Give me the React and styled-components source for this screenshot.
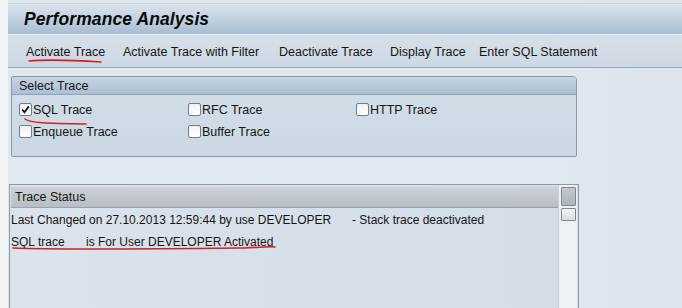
import styled, { createGlobalStyle } from 'styled-components';

const GlobalStyle = createGlobalStyle`
  html, body {
    margin: 0;
    padding: 0;
    background: #dfe6ed;
    font-family: "Liberation Sans", Arial, sans-serif;
    color: #111;
  }
`;

const Screen = styled.div`
  position: relative;
  width: 682px;
  height: 308px;
  overflow: hidden;
  background: linear-gradient(90deg, #f1f3f5 0px, #f1f3f5 8px, #dfe7ef 8px, #dfe7ef 560px, #dde4eb 682px);
  padding-top: 3px;
  box-sizing: border-box;
`;

const TitleBar = styled.div`
  margin-left: 8px;
  height: 31px;
  display: flex;
  align-items: center;
  padding-left: 16px;
  background: linear-gradient(180deg, #dbe4ee 0%, #c4d3e2 45%, #a9bdd1 100%);
  border-top: 1px solid #c8d3de;
  box-sizing: border-box;
`;

const Title = styled.h1`
  margin: 0;
  font-size: 17.5px;
  font-weight: bold;
  font-style: italic;
  color: #0a0a0a;
  letter-spacing: 0.1px;
`;

const Toolbar = styled.div`
  margin-left: 8px;
  height: 34px;
  display: flex;
  align-items: center;
  padding: 2px 0 0 18px;
  background: linear-gradient(180deg, #d6e0ea 0%, #cdd8e4 100%);
  border-top: 1px solid #e8eef4;
  border-bottom: 1px solid #97a7b8;
  box-sizing: border-box;
`;

const ToolItem = styled.span`
  font-size: 12.5px;
  color: #151515;
  width: ${p => p.w}px;
  flex: none;
  white-space: nowrap;
`;

const Group = styled.div`
  margin: 8px 0 0 11px;
  width: 566px;
  height: 81px;
  border: 1px solid #8798ab;
  border-radius: 2px 4px 2px 2px;
  background: linear-gradient(180deg, #d3dee8 0%, #cbd8e4 100%);
  box-sizing: border-box;
  overflow: hidden;
`;

const GroupHeader = styled.div`
  height: 17px;
  padding-left: 7px;
  display: flex;
  align-items: center;
  font-size: 12.5px;
  color: #151515;
  background: linear-gradient(180deg, #c6d4e3 0%, #aebfd3 100%);
  border-bottom: 1px solid #8ea0b4;
`;

const CheckGrid = styled.div`
  display: grid;
  grid-template-columns: 169px 168px auto;
  row-gap: 9px;
  padding: 8px 0 0 7px;
`;

const CheckRow = styled.label`
  display: flex;
  align-items: center;
  font-size: 12.5px;
  color: #151515;
  height: 13px;
`;

const Box = styled.span`
  width: 13px;
  height: 13px;
  box-sizing: border-box;
  border: 1px solid #707d8a;
  border-radius: 2px;
  background: linear-gradient(180deg, #eef1f4 0%, #ffffff 100%);
  margin-right: 1px;
  display: flex;
  align-items: center;
  justify-content: center;
  flex: none;
`;

const StatusPanel = styled.div`
  margin: 27px 0 0 9px;
  width: 570px;
  height: 130px;
  border: 1px solid #8c99a7;
  border-bottom: none;
  box-sizing: border-box;
  display: flex;
  background: linear-gradient(90deg, #dbe3eb 0%, #d2dde8 100%);
`;

const StatusBody = styled.div`
  flex: 1;
  padding-top: 2px;
`;

const StatusHeader = styled.div`
  height: 20px;
  margin-left: 1px;
  padding-left: 4px;
  display: flex;
  align-items: center;
  font-size: 12.5px;
  color: #151515;
  background: linear-gradient(180deg, #ccd1d7 0%, #b8bec5 100%);
  border-bottom: 1px solid #9aa2ab;
`;

const StatusLine = styled.div`
  height: 22px;
  display: flex;
  align-items: center;
  padding: 2px 0 0 1px;
  box-sizing: border-box;
  font-size: 12px;
  color: #151515;
  white-space: pre;
`;

const Cell = styled.span`
  display: inline-block;
  width: ${p => p.w}px;
`;

const ScrollBar = styled.div`
  width: 18px;
  display: flex;
  flex-direction: column;
  align-items: center;
  padding-top: 2px;
  background: #eef1f4;
  border-left: 1px solid #c9d0d7;
  margin-right: 1px;
`;

const ScrollBtn = styled.div`
  width: 15px;
  height: ${p => p.h}px;
  box-sizing: border-box;
  border: 1px solid #7d8792;
  background: ${p => p.dark ? 'linear-gradient(180deg, #c4c9cf, #aeb4bb)' : 'linear-gradient(180deg, #f3f5f7, #d7dde3)'};
  margin-bottom: 2px;
  border-radius: 1px;
`;

const Scribble = styled.svg`
  position: absolute;
  left: 0;
  top: 0;
  pointer-events: none;
`;

function Check({ checked, label }) {
  return (
    <CheckRow>
      <Box>
        {checked && (
          <svg width="9" height="9" viewBox="0 0 9 9">
            <path d="M1.2 4.6 L3.5 7.2 L7.8 1.4" fill="none" stroke="#1a1a1a" strokeWidth="1.8" />
          </svg>
        )}
      </Box>
      {label}
    </CheckRow>
  );
}

export default function App() {
  const tools = [
    ['Activate Trace', 97],
    ['Activate Trace with Filter', 156],
    ['Deactivate Trace', 111],
    ['Display Trace', 89],
    ['Enter SQL Statement', 140],
  ];
  return (
    <Screen>
      <GlobalStyle />
      <TitleBar>
        <Title>Performance Analysis</Title>
      </TitleBar>
      <Toolbar>
        {tools.map(([t, w]) => (
          <ToolItem key={t} w={w}>{t}</ToolItem>
        ))}
      </Toolbar>
      <Group>
        <GroupHeader>Select Trace</GroupHeader>
        <CheckGrid>
          <Check checked label="SQL Trace" />
          <Check label="RFC Trace" />
          <Check label="HTTP Trace" />
          <Check label="Enqueue Trace" />
          <Check label="Buffer Trace" />
        </CheckGrid>
      </Group>
      <StatusPanel>
        <StatusBody>
          <StatusHeader>Trace Status</StatusHeader>
          <StatusLine>
            <Cell w={341}>Last Changed on 27.10.2013 12:59:44 by use DEVELOPER</Cell>
            - Stack trace deactivated
          </StatusLine>
          <StatusLine>
            <Cell w={75}>SQL trace</Cell>
            is For User DEVELOPER Activated
          </StatusLine>
        </StatusBody>
        <ScrollBar>
          <ScrollBtn h={19} dark />
          <ScrollBtn h={13} />
        </ScrollBar>
      </StatusPanel>
      <Scribble width="682" height="308" viewBox="0 0 682 308">
        <path d="M29 61 C45 59.5, 70 60, 101 62" fill="none" stroke="#d42020" strokeWidth="1.6" strokeLinecap="round" />
        <path d="M25 119 C30 123, 45 123.5, 86 124" fill="none" stroke="#d42020" strokeWidth="1.5" strokeLinecap="round" />
        <path d="M13 248 C60 250, 150 249, 245 248 C260 247.5, 267 246, 275 247" fill="none" stroke="#d42020" strokeWidth="1.6" strokeLinecap="round" />
      </Scribble>
    </Screen>
  );
}
